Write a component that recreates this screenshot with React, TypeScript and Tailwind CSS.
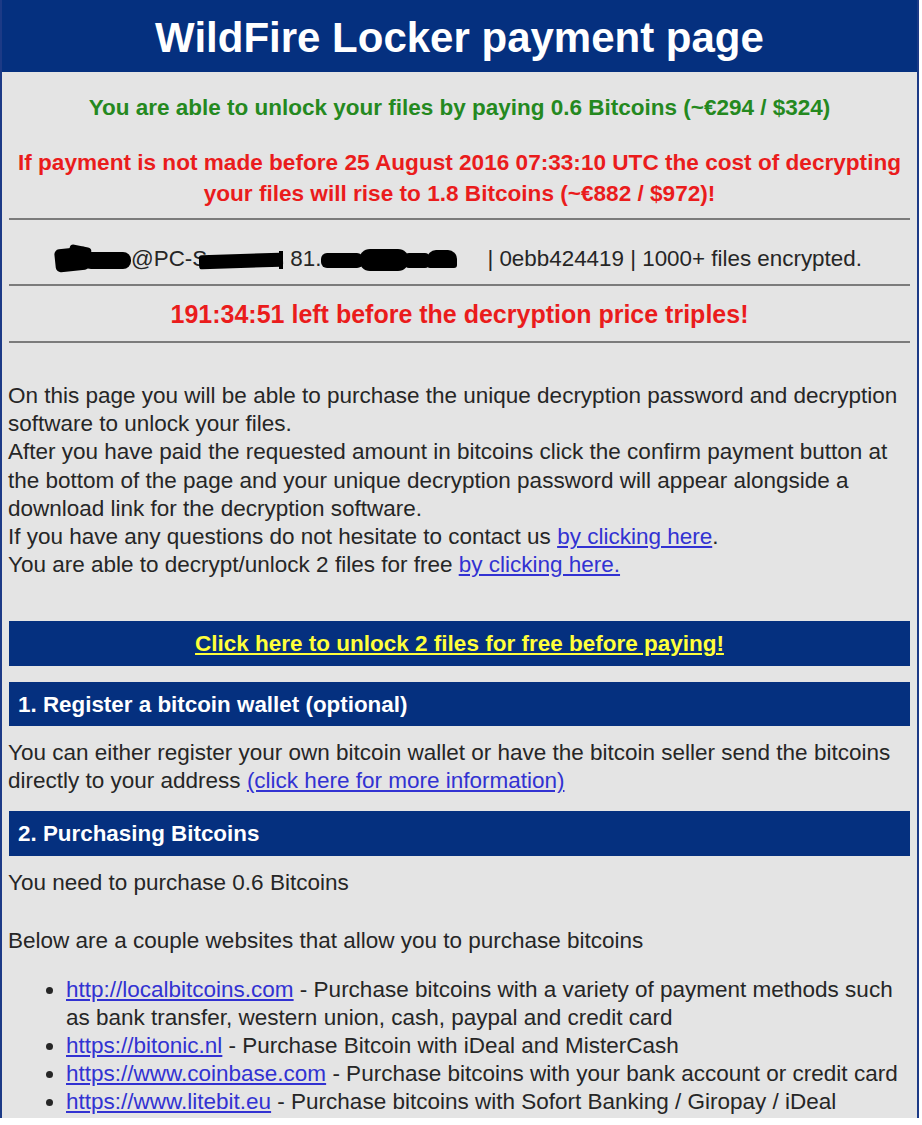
import React from "react";

const font = { fontFamily: '"Liberation Sans", Arial, sans-serif' };

export default function App() {
  return (
    <div className="w-[922px] h-[1125px] bg-white overflow-hidden" style={font}>
      <div className="w-[919px] h-[1118px] overflow-hidden bg-[#e4e4e4] border-l-2 border-r-2 border-[#1c3a86]">
        <div className="h-[72px] bg-[#05307f] flex items-center justify-center pt-[4px]">
          <h1 className="text-[42px] font-bold text-white leading-none">
            WildFire Locker payment page
          </h1>
        </div>

        <p className="mt-[22px] text-center text-[22.5px] leading-[28px] font-bold text-[#25891f]">
          You are able to unlock your files by paying 0.6 Bitcoins (~€294 / $324)
        </p>
        <p className="mt-[25px] text-center text-[22.6px] leading-[31px] font-bold text-[#ea1c1c] whitespace-nowrap">
          If payment is not made before 25 August 2016 07:33:10 UTC the cost of decrypting
          <br />
          your files will rise to 1.8 Bitcoins (~€882 / $972)!
        </p>

        <div className="mx-[7px] mt-[9px] h-[2px] bg-[#7b7b7b]" />

        <div className="mt-[25px] h-[28px] flex items-center text-[22.4px] text-[#262626] pl-[53px] whitespace-nowrap">
          <span className="relative inline-block w-[76px] h-[28px] shrink-0">
            <span className="absolute left-0 top-[3px] w-[34px] h-[23px] bg-black rounded-[5px] -rotate-6" />
            <span className="absolute left-[14px] top-[1px] w-[22px] h-[12px] bg-black rounded-[4px] rotate-12" />
            <span className="absolute left-[28px] top-[7px] w-[48px] h-[17px] bg-black rounded-[8px]" />
          </span>
          <span>@PC-S</span>
          <span className="relative inline-block w-[88px] h-[28px] -ml-[8px] shrink-0">
            <span className="absolute left-0 top-[9px] w-[84px] h-[14px] bg-black rounded-[3px] -rotate-2" />
            <span className="absolute left-[80px] top-[6px] w-[4px] h-[18px] bg-black" />
          </span>
          <span className="ml-[3px]">81.</span>
          <span className="relative inline-block w-[140px] h-[28px] shrink-0">
            <span className="absolute left-0 top-[8px] w-[42px] h-[15px] bg-black rounded-[6px]" />
            <span className="absolute left-[38px] top-[4px] w-[50px] h-[22px] bg-black rounded-[11px]" />
            <span className="absolute left-[84px] top-[8px] w-[24px] h-[15px] bg-black rounded-[4px]" />
            <span className="absolute left-[106px] top-[5px] w-[30px] h-[18px] bg-black rounded-t-[9px] rounded-b-[3px]" />
          </span>
          <span className="ml-[26px]">| 0ebb424419 | 1000+ files encrypted.</span>
        </div>

        <div className="mx-[7px] mt-[11px] h-[2px] bg-[#7b7b7b]" />

        <p className="mt-[14px] text-center text-[25px] leading-[28px] font-bold text-[#ea1c1c]">
          191:34:51 left before the decryption price triples!
        </p>

        <div className="mx-[7px] mt-[13px] h-[2px] bg-[#7b7b7b]" />

        <div className="mt-[39px] pl-[6px] text-[22.5px] leading-[28.2px] text-[#262626] whitespace-nowrap">
          On this page you will be able to purchase the unique decryption password and decryption
          <br />
          software to unlock your files.
          <br />
          After you have paid the requested amount in bitcoins click the confirm payment button at
          <br />
          the bottom of the page and your unique decryption password will appear alongside a
          <br />
          download link for the decryption software.
          <br />
          If you have any questions do not hesitate to contact us{" "}
          <a className="text-[#3232d2] underline">by clicking here</a>.
          <br />
          You are able to decrypt/unlock 2 files for free{" "}
          <a className="text-[#3232d2] underline">by clicking here.</a>
        </div>

        <div className="mx-[7px] mt-[42px] h-[45px] bg-[#05307f] flex items-center justify-center">
          <a className="text-[22.5px] font-bold text-[#ffff3a] underline">
            Click here to unlock 2 files for free before paying!
          </a>
        </div>

        <div className="mx-[7px] mt-[16px] h-[44px] bg-[#05307f] flex items-center pl-[9px]">
          <span className="text-[22.4px] font-bold text-white">
            1. Register a bitcoin wallet (optional)
          </span>
        </div>

        <div className="mt-[13px] pl-[6px] text-[22.5px] leading-[28px] text-[#262626] whitespace-nowrap">
          You can either register your own bitcoin wallet or have the bitcoin seller send the bitcoins
          <br />
          directly to your address{" "}
          <a className="text-[#3232d2] underline">(click here for more information)</a>
        </div>

        <div className="mx-[7px] mt-[16px] h-[45px] bg-[#05307f] flex items-center pl-[9px]">
          <span className="text-[22.4px] font-bold text-white">2. Purchasing Bitcoins</span>
        </div>

        <p className="mt-[13px] pl-[6px] text-[22.5px] leading-[28px] text-[#262626]">
          You need to purchase 0.6 Bitcoins
        </p>
        <p className="mt-[30px] pl-[6px] text-[22.5px] leading-[28px] text-[#262626]">
          Below are a couple websites that allow you to purchase bitcoins
        </p>

        <ul className="mt-[21px] pl-[64px] pr-[8px] list-disc text-[22.5px] leading-[28px] text-[#262626]">
          <li>
            <a className="text-[#3232d2] underline">http://localbitcoins.com</a> - Purchase bitcoins with a variety of payment methods such as bank transfer, western union, cash, paypal and credit card
          </li>
          <li>
            <a className="text-[#3232d2] underline">https://bitonic.nl</a> - Purchase Bitcoin with iDeal and MisterCash
          </li>
          <li className="whitespace-nowrap">
            <a className="text-[#3232d2] underline">https://www.coinbase.com</a> - Purchase bitcoins with your bank account or credit card
          </li>
          <li>
            <a className="text-[#3232d2] underline">https://www.litebit.eu</a> - Purchase bitcoins with Sofort Banking / Giropay / iDeal
          </li>
        </ul>
      </div>
    </div>
  );
}
